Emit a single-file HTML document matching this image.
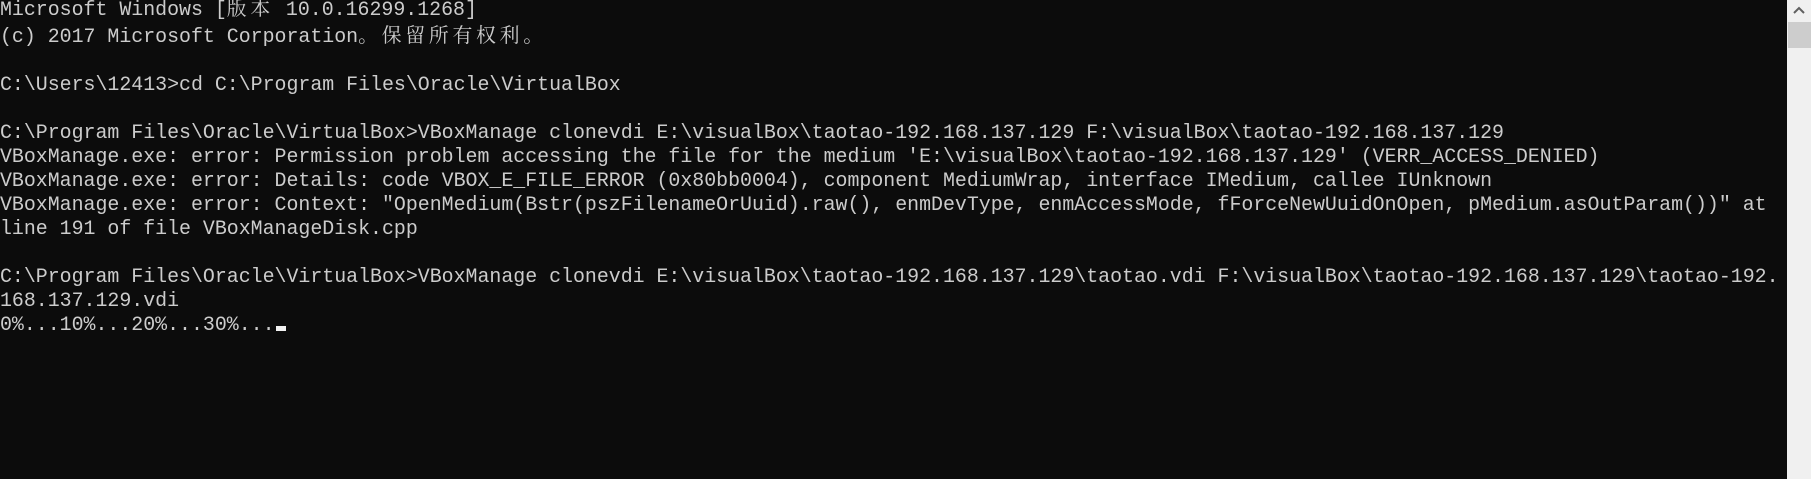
<!DOCTYPE html>
<html><head><meta charset="utf-8"><style>
html,body{margin:0;padding:0;width:1811px;height:479px;overflow:hidden;background:#0c0c0c;}
#t{position:absolute;left:0;top:-5px;margin:0;font-family:"Liberation Mono","Noto Serif CJK SC",monospace;font-size:19.9px;line-height:24px;color:#cccccc;white-space:pre;}
.c{letter-spacing:3.7px;font-family:"Noto Serif CJK SC","Noto Sans CJK SC",serif;}
#cur{position:absolute;left:276px;top:326px;width:10px;height:5px;background:#f2f2f2;}
#sb{position:absolute;left:1787px;top:0;width:24px;height:479px;background:#f0f0f0;}
#th{position:absolute;left:1788px;top:22px;width:23px;height:26px;background:#cdcdcd;}
</style></head><body>
<pre id="t">Microsoft Windows [<span class="c">版本</span> 10.0.16299.1268]
(c) 2017 Microsoft Corporation<span class="c">。保留所有权利。</span>

C:\Users\12413>cd C:\Program Files\Oracle\VirtualBox

C:\Program Files\Oracle\VirtualBox>VBoxManage clonevdi E:\visualBox\taotao-192.168.137.129 F:\visualBox\taotao-192.168.137.129
VBoxManage.exe: error: Permission problem accessing the file for the medium 'E:\visualBox\taotao-192.168.137.129' (VERR_ACCESS_DENIED)
VBoxManage.exe: error: Details: code VBOX_E_FILE_ERROR (0x80bb0004), component MediumWrap, interface IMedium, callee IUnknown
VBoxManage.exe: error: Context: "OpenMedium(Bstr(pszFilenameOrUuid).raw(), enmDevType, enmAccessMode, fForceNewUuidOnOpen, pMedium.asOutParam())" at
line 191 of file VBoxManageDisk.cpp

C:\Program Files\Oracle\VirtualBox>VBoxManage clonevdi E:\visualBox\taotao-192.168.137.129\taotao.vdi F:\visualBox\taotao-192.168.137.129\taotao-192.
168.137.129.vdi
0%...10%...20%...30%...</pre>
<div id="cur"></div>
<div id="sb"></div><div id="th"></div>
<svg style="position:absolute;left:1787px;top:0" width="24" height="20"><path d="M7 13 L12 8 L17 13" fill="none" stroke="#606060" stroke-width="2"/></svg>
</body></html>
